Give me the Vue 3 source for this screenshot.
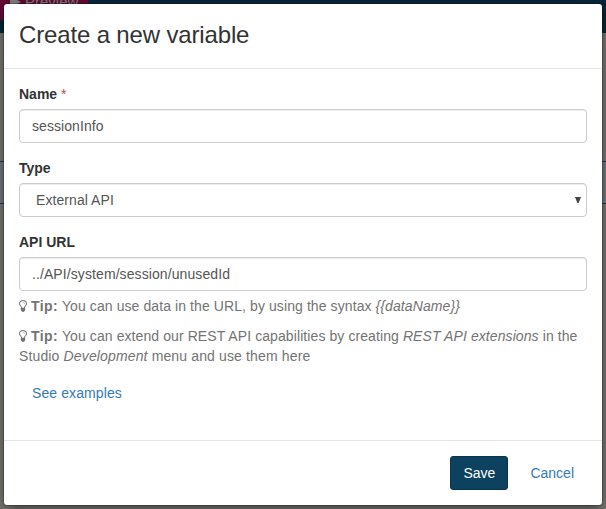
<script setup>
import { ref } from 'vue'

const name = ref('sessionInfo')
const type = ref('External API')
const url = ref('../API/system/session/unusedId')
const syntax = '{{dataName}}'
const bulb =
  'M1120 576q0 13-9.5 22.5t-22.5 9.5-22.5-9.5-9.5-22.5q0-46-54-71t-106-25q-13 0-22.5-9.5t-9.5-22.5 9.5-22.5 22.5-9.5q50 0 99.5 16t87 54 37.5 90zm160 0q0-72-34.5-134t-90-101.5-123-62-136.5-22.5-136.5 22.5-123 62-90 101.5-34.5 134q0 101 68 180 10 11 30.5 33t30.5 33q128 153 141 298h228q13-145 141-298 10-11 30.5-33t30.5-33q68-79 68-180zm128 0q0 155-103 268-45 49-74.5 87t-59.5 95.5-34 107.5q47 28 47 82 0 37-25 64 25 27 25 64 0 52-45 81 13 23 13 47 0 46-31.5 71t-77.5 25q-20 44-60 70t-87 26-87-26-60-70q-46 0-77.5-25t-31.5-71q0-24 13-47-45-29-45-81 0-37 25-64-25-27-25-64 0-54 47-82-4-50-34-107.5t-59.5-95.5-74.5-87q-103-113-103-268 0-99 44.5-184.5t117-142 164-89 186.5-32.5 186.5 32.5 164 89 117 142 44.5 184.5z'
</script>

<template>
  <div class="screen">
    <div class="page">
      <div class="topbar">
        <div class="preview">
          <svg class="play" viewBox="0 0 11 12"><path d="M0 0L11 6L0 12Z" /></svg>
          <span>Preview</span>
        </div>
      </div>
      <div class="band"></div>
    </div>

    <div class="modal">
      <header class="modal-header"><h3>Create a new variable</h3></header>

      <div class="modal-body">
        <div class="group">
          <label for="name">Name <span class="required">*</span></label>
          <input id="name" v-model="name" class="control" type="text" />
        </div>

        <div class="group">
          <label for="type">Type</label>
          <div class="select-wrap">
            <select id="type" v-model="type" class="control select">
              <option>External API</option>
            </select>
            <svg class="caret" viewBox="0 0 6 6"><path d="M0 0H6L3.6 6H2.4Z" /></svg>
          </div>
        </div>

        <div class="group">
          <label for="url">API URL</label>
          <input id="url" v-model="url" class="control url" type="text" />
          <p class="help">
            <svg class="bulb" viewBox="384 0 1024 1792"><path :d="bulb" /></svg>
            <strong>Tip:</strong> You can use data in the URL, by using the syntax <em>{{ syntax }}</em>
          </p>
          <p class="help">
            <svg class="bulb" viewBox="384 0 1024 1792"><path :d="bulb" /></svg>
            <strong>Tip:</strong> You can extend our REST API capabilities by creating
            <em>REST API extensions</em> in the <span class="tail">Studio <em>Development</em> menu and use them here</span>
          </p>
        </div>
        <button class="btn link examples" type="button">See examples</button>
      </div>

      <footer class="modal-footer">
        <button class="btn primary" type="button">Save</button>
        <button class="btn link" type="button">Cancel</button>
      </footer>
    </div>
  </div>
</template>

<style>
body {
  margin: 0;
  overflow: hidden;
}
</style>

<style scoped>
* {
  box-sizing: border-box;
}
.screen {
  position: relative;
  width: 606px;
  height: 509px;
  padding: 4px;
  overflow: hidden;
  background: #7c7975;
  font: 14px/20px "Liberation Sans", Arial, sans-serif;
  color: #333;
}
.page {
  position: absolute;
  inset: 0;
}
.topbar {
  height: 33px;
  background: #06283a;
}
.preview {
  display: flex;
  gap: 4px;
  width: 88px;
  height: 20px;
  padding-left: 10px;
  background: #640a33;
  color: #7f7f7f;
  line-height: 20px;
}
.preview span {
  margin-top: -8px;
  font-size: 15px;
}
.play {
  width: 11px;
  height: 12px;
  margin-top: -4px;
  fill: #7f7f7f;
}
.band {
  height: 43px;
  margin-top: 128px;
  border-top: 1px solid #153c60;
  border-bottom: 1px solid #153c60;
  background: #747c7e;
}
.modal {
  position: relative;
  height: 501px;
  border-radius: 3px;
  background: #fff;
  box-shadow: 0 5px 15px rgba(0, 0, 0, 0.5), 0 0 0 1px rgba(0, 0, 0, 0.2);
}
.modal-header {
  height: 65px;
  padding: 15px;
  border-bottom: 1px solid #e5e5e5;
}
h3 {
  margin: 0;
  font-size: 24px;
  font-weight: 400;
  line-height: 32px;
  letter-spacing: -0.15px;
}
.modal-body {
  height: 371px;
  padding: 15px;
}
.group {
  margin-bottom: 15px;
}
.group:last-of-type {
  margin-bottom: 10px;
}
label {
  display: block;
  margin-bottom: 5px;
  font-weight: 700;
}
.required {
  color: #b94a48;
  font-weight: 400;
}
.control {
  display: block;
  width: 100%;
  height: 34px;
  margin: 0;
  padding: 6px 12px;
  border: 1px solid #ccc;
  border-radius: 4px;
  outline: 0;
  background: #fff;
  box-shadow: inset 0 1px 1px rgba(0, 0, 0, 0.075);
  color: #555;
  font: inherit;
  letter-spacing: 0.07px;
}
.url {
  letter-spacing: 0.09px;
}
.select {
  padding-left: 16px;
  appearance: none;
}
.select-wrap {
  position: relative;
}
.caret {
  position: absolute;
  top: 14px;
  right: 6px;
  width: 6px;
  height: 6px;
  fill: #444;
}
.help {
  margin: 5px 0 10px;
  color: #737373;
  letter-spacing: 0.09px;
}
.help strong {
  letter-spacing: 0.45px;
}
.tail {
  letter-spacing: 0.14px;
}
.bulb {
  display: inline-block;
  width: 8px;
  height: 14px;
  margin-right: 4px;
  vertical-align: -2px;
  fill: currentColor;
}
.btn {
  height: 34px;
  padding: 6px 12px;
  border: 1px solid transparent;
  border-radius: 4px;
  background: none;
  font: inherit;
}
.link {
  color: #337ab7;
}
.examples {
  letter-spacing: 0.1px;
}
.primary {
  border-color: #08344c;
  border-radius: 3px;
  background: #0c4260;
  color: #fff;
}
.modal-footer {
  display: flex;
  justify-content: flex-end;
  gap: 9px;
  padding: 15px;
  border-top: 1px solid #e5e5e5;
}
</style>
